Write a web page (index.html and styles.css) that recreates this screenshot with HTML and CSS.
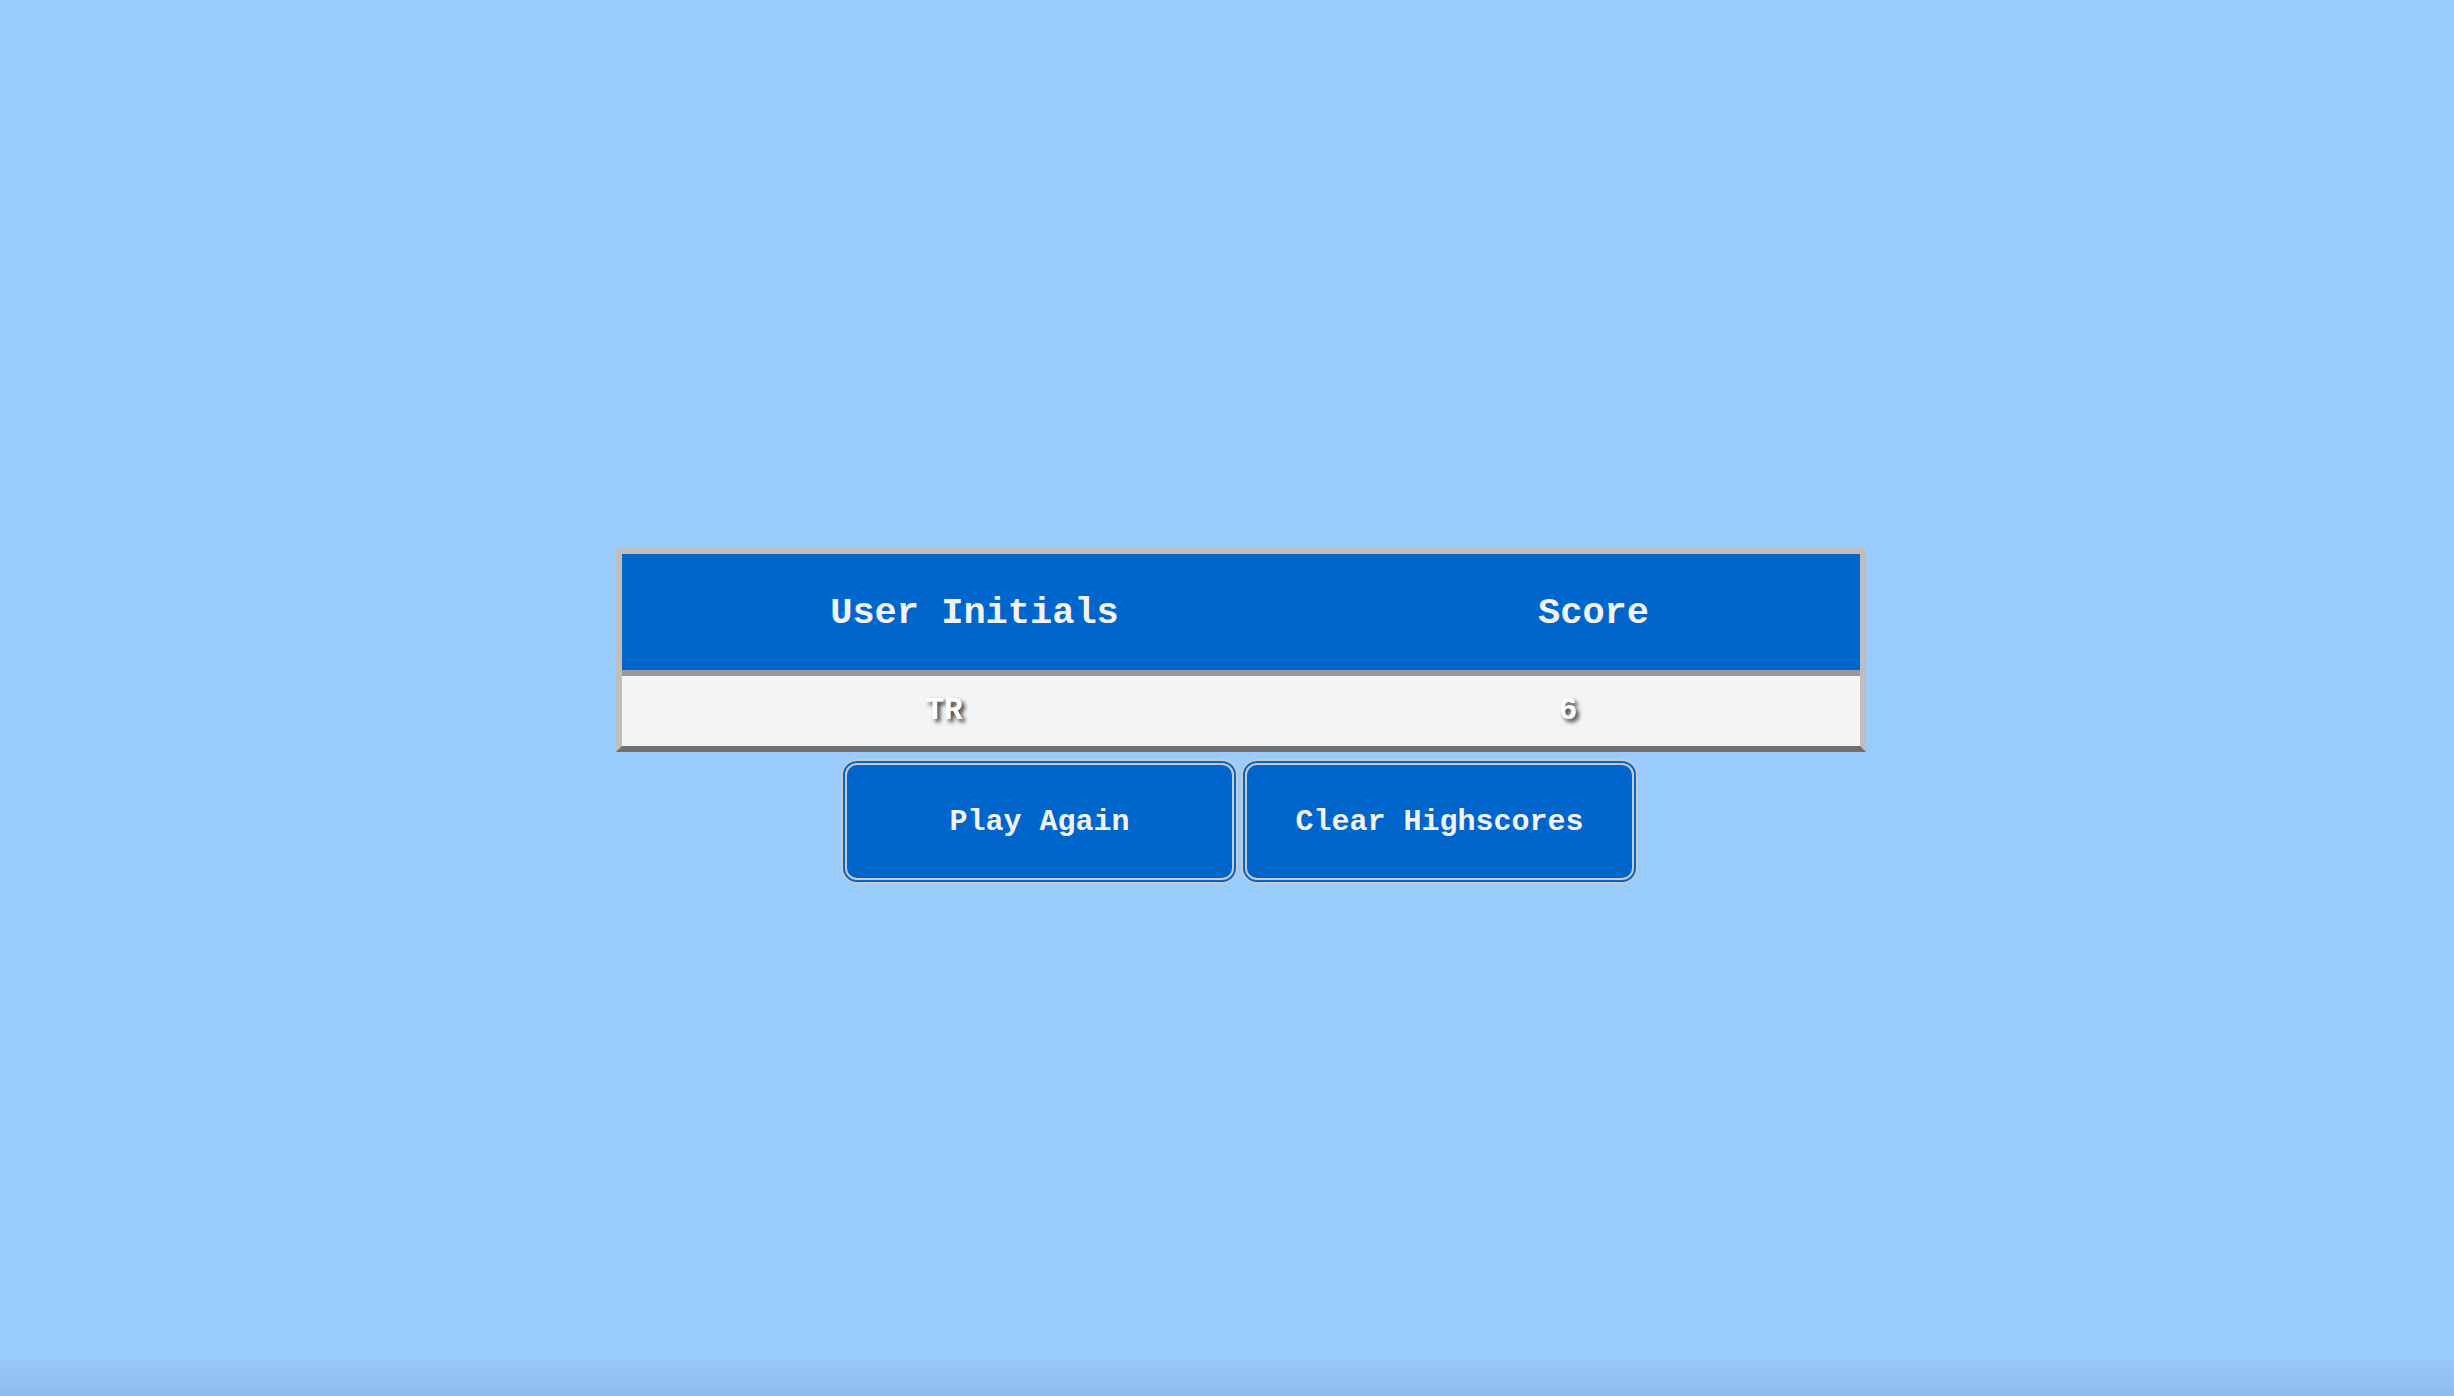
FILE: index.html
```html
<!DOCTYPE html>
<html lang="en">
<head>
<meta charset="utf-8">
<title>Highscores</title>
<link rel="stylesheet" href="styles.css">
</head>
<body>
<main class="page">
  <section class="scores">
    <div class="scores-head">
      <div class="head-cell head-initials">User Initials</div>
      <div class="head-cell head-score">Score</div>
    </div>
    <div class="scores-row">
      <div class="row-cell row-initials">TR</div>
      <div class="row-cell row-score">6</div>
    </div>
  </section>
  <div class="actions">
    <button class="btn" type="button">Play Again</button>
    <button class="btn" type="button">Clear Highscores</button>
  </div>
</main>
</body>
</html>
```

FILE: styles.css
```css
html, body {
  margin: 0;
  padding: 0;
  height: 100%;
}
body {
  background: #99cbfb;
  font-family: "Liberation Mono", "Courier New", monospace;
  position: relative;
}
body::after {
  content: "";
  position: fixed;
  left: 0;
  right: 0;
  bottom: 0;
  height: 40px;
  background: linear-gradient(to bottom, rgba(140,185,235,0) 0%, rgba(140,185,235,0.9) 100%);
  pointer-events: none;
}
.page {
  display: flex;
  flex-direction: column;
  align-items: center;
  padding-top: 548px;
  padding-left: 28px;
}
.scores {
  width: 1238px;
  border: 6px solid #bebebe;
  border-bottom-color: #6f6f6f;
}
.scores-head {
  display: grid;
  grid-template-columns: 705px 533px;
  height: 116px;
  background: #0066cc;
  border-bottom: 6px solid #999999;
  color: #f2f2f2;
  font-weight: bold;
  font-size: 37px;
}
.head-cell {
  display: flex;
  align-items: center;
  justify-content: center;
  padding-top: 1px;
}
.scores-row {
  display: grid;
  grid-template-columns: 644px 594px;
  height: 70px;
  background: #f4f4f4;
  color: #ffffff;
  font-weight: bold;
  font-size: 31px;
  text-shadow: 3px 3px 4px rgba(0,0,0,0.8);
}
.row-cell {
  display: flex;
  align-items: center;
  justify-content: center;
  padding-bottom: 2px;
}
.row-score {
  padding-left: 10px;
}
.actions {
  display: flex;
  gap: 3px;
  margin-top: 7px;
  margin-left: -3px;
}
.btn {
  width: 397px;
  height: 125px;
  margin: 0;
  background: #0066cc;
  border: 6px double #c9c9c9;
  border-radius: 16px;
  color: #f2f2f2;
  font-family: "Liberation Mono", "Courier New", monospace;
  font-weight: bold;
  font-size: 30px;
  padding: 0;
  cursor: pointer;
}
```
